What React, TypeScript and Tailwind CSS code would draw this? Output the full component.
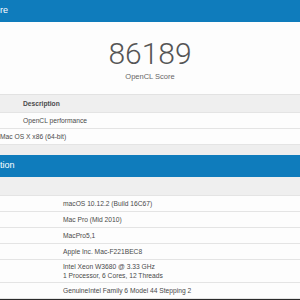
// Cropped view of a benchmark result page: score card, a small info table,
// and the start of the system information table.

const rowText = "text-[6.7px] text-[#4a4a4a] leading-[8px]";

function SectionHeader({ label }: { label: string }) {
  return (
    <div className="h-[22px] bg-[#0f7cbc] flex items-center text-[9px] text-white">
      {label}
    </div>
  );
}

const systemRows: string[][] = [
  ["macOS 10.12.2 (Build 16C67)"],
  ["Mac Pro (Mid 2010)"],
  ["MacPro5,1"],
  ["Apple Inc. Mac-F221BEC8"],
  ["Intel Xeon W3680 @ 3.33 GHz", "1 Processor, 6 Cores, 12 Threads"],
  ["GenuineIntel Family 6 Model 44 Stepping 2"],
];

export default function App() {
  return (
    <div
      className="w-[300px] h-[300px] overflow-hidden bg-[#eeeeee] flex flex-col"
      style={{ fontFamily: '"Liberation Sans", Arial, sans-serif' }}
    >
      <SectionHeader label="re" />

      {/* score */}
      <div className="h-[73px] bg-[#fdfdfd] flex flex-col items-center pt-[17px]">
        <div
          className="text-[30px] leading-[30px] font-light text-[#555555]"
          style={{ fontFamily: "Roboto, sans-serif" }}
        >
          86189
        </div>
        <div className="mt-[3px] text-[7.5px] leading-[9px] text-[#666666]">
          OpenCL Score
        </div>
      </div>

      {/* workload table */}
      <div className="h-[18px] bg-[#efefef] border-t border-[#e2e2e2] flex items-center pl-[23px] pt-[1px]">
        <span className="text-[6.7px] font-bold text-[#4a4a4a]">Description</span>
      </div>
      <div className="bg-[#fdfdfd]">
        <div className={`h-[16px] border-t border-[#e4e4e4] flex items-center pl-[23px] ${rowText}`}>
          OpenCL performance
        </div>
        <div className={`h-[17px] border-y border-[#e4e4e4] flex items-center ${rowText}`}>
          Mac OS X x86 (64-bit)
        </div>
      </div>

      <div className="mt-[10px]">
        <SectionHeader label="tion" />
      </div>

      {/* system information */}
      <div className="h-[18px] bg-[#efefef]" />
      <div className="bg-[#fdfdfd]">
        {systemRows.map((lines, i) => (
          <div
            key={i}
            className={`grid grid-cols-[63px_1fr] items-center border-t border-[#e4e4e4] ${
              lines.length > 1 ? "h-[23px]" : "h-[16px]"
            }`}
          >
            <div />
            <div className={rowText}>
              {lines.map((l) => (
                <div key={l} className="leading-[9px]">
                  {l}
                </div>
              ))}
            </div>
          </div>
        ))}
      </div>
      <div className="border-t border-[#e4e4e4] h-[2px] bg-[#2b2b2b]" />
    </div>
  );
}
